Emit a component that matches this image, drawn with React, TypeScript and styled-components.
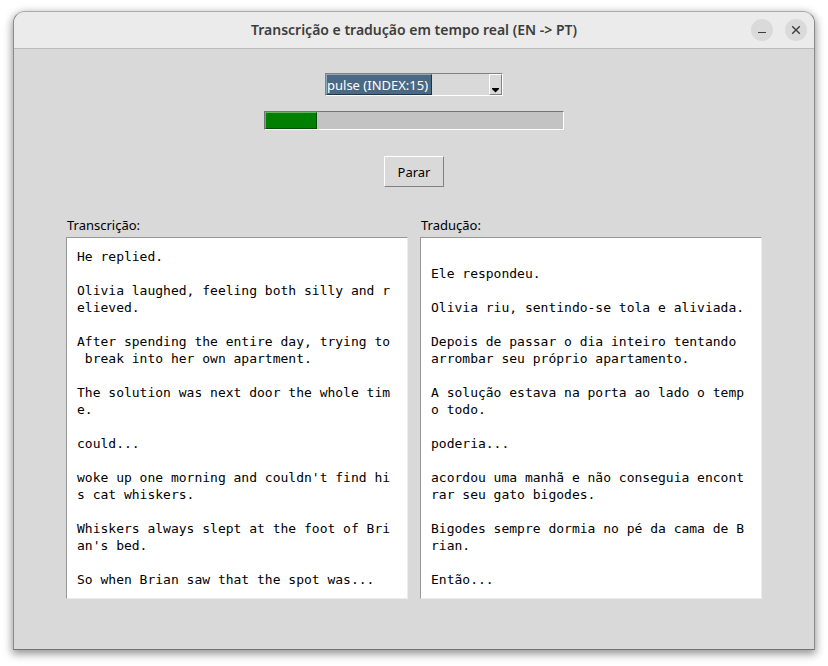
import React, { useRef, useState } from 'react';
import styled, { createGlobalStyle } from 'styled-components';

const GlobalStyle = createGlobalStyle`
  *, *::before, *::after { box-sizing: border-box; }
  body {
    margin: 0;
    background: #ffffff;
    color: #000000;
    font: 13px/18px "Noto Sans", "Open Sans", sans-serif;
  }
  button, select, textarea { font: inherit; color: inherit; margin: 0; border-radius: 0; }
`;

const Desktop = styled.div`
  min-height: 100vh;
  padding: 11px 13px 16px;
  display: flex;
`;

const Window = styled.main`
  flex: 1;
  display: flex;
  flex-direction: column;
  border: 1px solid #8a8a8a;
  border-top-color: #a8aaa8;
  border-bottom-color: #747474;
  border-radius: 12px 12px 0 0;
  background: #d9d9d9;
  box-shadow: 0 3px 9px 1px rgba(0, 0, 0, 0.42);
  overflow: hidden;
`;

const TitleBar = styled.header`
  display: grid;
  grid-template-columns: 1fr auto 1fr;
  align-items: center;
  height: 37px;
  padding: 0 7px;
  background: #ebebeb;
  border-bottom: 1px solid #bababa;
`;

const Title = styled.h1`
  grid-column: 2;
  margin: 0;
  font-size: 14px;
  line-height: 20px;
  font-weight: 600;
  color: #3d3d3d;
`;

const WindowButtons = styled.div`
  display: flex;
  justify-content: flex-end;
  gap: 12px;
`;

const RoundButton = styled.button`
  display: flex;
  width: 22px;
  height: 22px;
  padding: 0;
  border: 0;
  border-radius: 50%;
  background: #dadada;
  color: #3d3d3d;
`;

const Body = styled.div`
  flex: 1;
  display: flex;
  flex-direction: column;
  align-items: center;
  padding: 24px 52px 50px;
`;

const Combo = styled.div`
  display: flex;
  justify-content: space-between;
  width: 178px;
  height: 23px;
  border: 1px solid;
  border-color: #828282 #ffffff #ffffff #828282;
`;

const DeviceSelect = styled.select`
  appearance: none;
  field-sizing: content;
  height: 21px;
  padding: 0 3px 0 0;
  border: 1px solid;
  border-color: #91a7b9 #233648 #233648 #91a7b9;
  background: #4a6984;
  color: #ffffff;
  outline: none;

  option { background: #ffffff; color: #000000; }
`;

const ArrowButton = styled.button`
  display: flex;
  width: 13px;
  padding: 0;
  border: 1px solid;
  border-color: #ffffff #828282 #828282 #ffffff;
  background: #d9d9d9;
`;

const Meter = styled.div`
  width: 300px;
  height: 19px;
  margin-top: 15px;
  border: 1px solid;
  border-color: #757575 #ffffff #ffffff #757575;
  background: #c3c3c3;
`;

const MeterFill = styled.div`
  height: 100%;
  border: 1px solid;
  border-color: #66b366 #004d00 #004d00 #66b366;
  background: #008000;
`;

const PushButton = styled.button`
  height: 31px;
  margin-top: 26px;
  padding: 0 13px;
  border: 1px solid;
  border-color: #ffffff #828282 #828282 #ffffff;
  background: #d9d9d9;
`;

const Columns = styled.div`
  align-self: stretch;
  display: grid;
  grid-template-columns: 1fr 1fr;
  gap: 12px;
  margin-top: 29px;
`;

const Column = styled.div`
  display: flex;
  flex-direction: column;
  gap: 3px;
`;

const ColumnLabel = styled.label`
  padding-left: 1px;
`;

const TextBox = styled.textarea`
  display: block;
  width: 100%;
  padding: 10px;
  border: 1px solid;
  border-color: #989898 #ececec #ececec #989898;
  background: #ffffff;
  font-family: "DejaVu Sans Mono", monospace;
  font-size: 13px;
  line-height: 17px;
  white-space: break-spaces;
  word-break: break-all;
  line-break: anywhere;
  resize: none;
  outline: none;
  overflow: hidden;
`;

const transcript = [
  'He replied.',
  'Olivia laughed, feeling both silly and relieved.',
  'After spending the entire day, trying to break into her own apartment.',
  'The solution was next door the whole time.',
  'could...',
  "woke up one morning and couldn't find his cat whiskers.",
  "Whiskers always slept at the foot of Brian's bed.",
  'So when Brian saw that the spot was...',
].join('\n\n');

const translation = '\n' + [
  'Ele respondeu.',
  'Olivia riu, sentindo-se tola e aliviada.',
  'Depois de passar o dia inteiro tentando arrombar seu próprio apartamento.',
  'A solução estava na porta ao lado o tempo todo.',
  'poderia...',
  'acordou uma manhã e não conseguia encontrar seu gato bigodes.',
  'Bigodes sempre dormia no pé da cama de Brian.',
  'Então...',
].join('\n\n');

interface TextPanelProps {
  id: string;
  label: string;
  initial: string;
}

function TextPanel({ id, label, initial }: TextPanelProps) {
  const [text, setText] = useState(initial);
  return (
    <Column>
      <ColumnLabel htmlFor={id}>{label}</ColumnLabel>
      <TextBox
        id={id}
        rows={20}
        spellCheck={false}
        value={text}
        onChange={(e) => setText(e.target.value)}
      />
    </Column>
  );
}

export default function App() {
  const device = useRef<HTMLSelectElement>(null);
  const level = 17.5;

  return (
    <>
      <GlobalStyle />
      <Desktop>
        <Window>
          <TitleBar>
            <Title>Transcrição e tradução em tempo real (EN -&gt; PT)</Title>
            <WindowButtons>
              <RoundButton type="button" aria-label="Minimizar">
                <svg width="22" height="22" viewBox="0 0 22 22" fill="none" stroke="currentColor">
                  <path d="M7 13.5H15" />
                </svg>
              </RoundButton>
              <RoundButton type="button" aria-label="Fechar">
                <svg width="22" height="22" viewBox="0 0 22 22" fill="none" stroke="currentColor" strokeWidth="1.4">
                  <path d="M7.2 7.2L14.8 14.8M14.8 7.2L7.2 14.8" />
                </svg>
              </RoundButton>
            </WindowButtons>
          </TitleBar>
          <Body>
            <Combo>
              <DeviceSelect ref={device} aria-label="Dispositivo de entrada">
                <option>pulse (INDEX:15)</option>
              </DeviceSelect>
              <ArrowButton
                type="button"
                aria-label="Abrir lista"
                onClick={() => device.current?.showPicker()}
              >
                <svg width="11" height="19" viewBox="0 0 11 19">
                  <path d="M2 13H9V14L5.5 17.5L2 14Z" fill="#000000" />
                </svg>
              </ArrowButton>
            </Combo>
            <Meter role="progressbar" aria-label="Volume" aria-valuenow={level} aria-valuemin={0} aria-valuemax={100}>
              <MeterFill style={{ width: `${level}%` }} />
            </Meter>
            <PushButton type="button">Parar</PushButton>
            <Columns>
              <TextPanel id="transcricao" label="Transcrição:" initial={transcript} />
              <TextPanel id="traducao" label="Tradução:" initial={translation} />
            </Columns>
          </Body>
        </Window>
      </Desktop>
    </>
  );
}
